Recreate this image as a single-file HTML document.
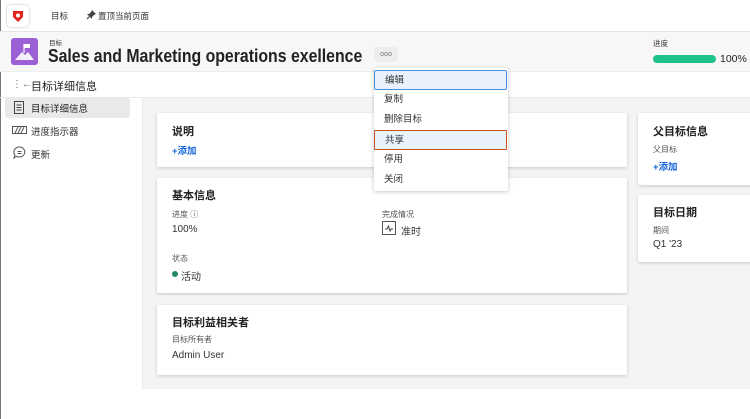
<!DOCTYPE html>
<html><head><meta charset="utf-8"><style>
*{margin:0;padding:0;box-sizing:border-box}
body{width:750px;height:419px;overflow:hidden;background:#fff;font-family:"Liberation Sans","Noto Sans CJK SC",sans-serif;color:#2c2c2c;position:relative}
.a{position:absolute;white-space:nowrap}
.card{position:absolute;background:#fff;box-shadow:0 1px 3px rgba(0,0,0,.18);border-radius:2px}
.h{font-size:11px;font-weight:bold;color:#222}
.s{font-size:8px;color:#555}
.v{font-size:10px;color:#333}
.add{font-size:9.5px;color:#1464d8;font-weight:bold}
.mi{position:absolute;left:0;width:133px;height:20px;font-size:9.5px;color:#333;padding-left:10px;line-height:20px}
</style></head><body>
<div class="a" style="left:0;top:0;width:1px;height:419px;background:#777"></div>
<div class="a" style="left:7px;top:5px;width:22px;height:22px;border-radius:4px;background:#fff;box-shadow:0 0 2px rgba(0,0,0,.3)"></div>
<svg class="a" style="left:11px;top:9px" width="14" height="14" viewBox="0 0 14 14"><path d="M2 2h10v6l-5 5-5-5z" fill="#e2231a"/><circle cx="7" cy="6.5" r="2" fill="#fff"/></svg>
<div class="a" style="left:51px;top:10px;font-size:8.5px;color:#333">目标</div>
<svg class="a" style="left:86px;top:9px" width="11" height="11" viewBox="0 0 11 11"><path d="M6 1l4 4-2 1-2 2 0 2-5-5 2 0 2-2z" fill="#444"/><path d="M3.5 7.5L1 10" stroke="#444" stroke-width="1.2"/></svg>
<div class="a" style="left:98px;top:10px;font-size:8.5px;color:#333">置顶当前页面</div>
<div class="a" style="left:0;top:31px;width:750px;height:41px;background:#f7f7f7;border-top:1px solid #e4e4e4;border-bottom:1px solid #ececec"></div>
<div class="a" style="left:11px;top:38px;width:27px;height:27px;border-radius:3px;background:#9b5fd6"></div>
<svg class="a" style="left:11px;top:38px" width="27" height="27" viewBox="0 0 27 27"><path d="M4 22l7-8 3 3 3-3 6 8z" fill="#fff" opacity=".9"/><path d="M13 6v9" stroke="#fff" stroke-width="1.2"/><path d="M13 6h6v4h-6z" fill="#fff"/></svg>
<div class="a" style="left:49px;top:37px;font-size:6.5px;color:#333">目标</div>
<div class="a" style="left:48px;top:46px;font-size:18px;font-weight:bold;color:#222;transform:scaleX(.88);transform-origin:0 0">Sales and Marketing operations exellence</div>
<div class="a" style="left:374px;top:47px;width:24px;height:15px;background:#ededed;border-radius:3px;font-size:7px;color:#777;text-align:center;line-height:15px">ooo</div>
<div class="a" style="left:653px;top:38px;font-size:7.5px;color:#333">进度</div>
<div class="a" style="left:653px;top:55px;width:63px;height:8px;border-radius:4px;background:#1ec28b"></div>
<div class="a" style="left:720px;top:53px;font-size:10.5px;color:#222">100%</div>
<div class="a" style="left:12px;top:79px;font-size:10px;color:#666">⋮←</div>
<div class="a" style="left:31px;top:78px;font-size:11px;color:#222">目标详细信息</div>
<div class="a" style="left:0;top:97px;width:750px;height:1px;background:#e8e8e8"></div>
<div class="a" style="left:5px;top:98px;width:125px;height:20px;background:#e9e9e9;border-radius:3px"></div>
<svg class="a" style="left:14px;top:101px" width="10" height="13" viewBox="0 0 10 13"><rect x=".5" y=".5" width="9" height="12" fill="none" stroke="#444"/><path d="M2.5 4h5M2.5 6.5h5M2.5 9h5" stroke="#444"/></svg>
<div class="a" style="left:31px;top:101px;font-size:9.5px;color:#222">目标详细信息</div>
<svg class="a" style="left:12px;top:126px" width="15" height="8" viewBox="0 0 15 8"><rect x=".5" y=".5" width="14" height="7" fill="none" stroke="#555"/><path d="M3 7l3-6M6 7l3-6M9 7l3-6" stroke="#555"/></svg>
<div class="a" style="left:31px;top:124px;font-size:9.5px;color:#333">进度指示器</div>
<svg class="a" style="left:13px;top:146px" width="13" height="13" viewBox="0 0 13 13"><path d="M6.5 1a5.5 5 0 1 1-3 9.3L1 12l1-3A5.5 5 0 0 1 6.5 1z" fill="none" stroke="#555"/><path d="M4.5 5.5h4M4.5 7.5h4" stroke="#555"/></svg>
<div class="a" style="left:31px;top:147px;font-size:9.5px;color:#333">更新</div>
<div class="a" style="left:142px;top:98px;width:608px;height:291px;background:#f4f4f4;border-left:1px solid #eaeaea"></div>
<div class="card" style="left:157px;top:113px;width:470px;height:54px"></div>
<div class="a h" style="left:172px;top:123px">说明</div>
<div class="a add" style="left:172px;top:143px">+添加</div>
<div class="card" style="left:157px;top:178px;width:470px;height:115px"></div>
<div class="a h" style="left:172px;top:187px">基本信息</div>
<div class="a s" style="left:172px;top:209px">进度 ⓘ</div>
<div class="a v" style="left:172px;top:224px">100%</div>
<div class="a s" style="left:382px;top:209px">完成情况</div>
<svg class="a" style="left:382px;top:221px" width="14" height="14" viewBox="0 0 14 14"><rect x=".5" y=".5" width="13" height="13" fill="#fff" stroke="#555"/><path d="M3 8h2l1.5-3 1.5 5 1-2h2" fill="none" stroke="#444"/></svg>
<div class="a v" style="left:401px;top:223px">准时</div>
<div class="a s" style="left:172px;top:253px">状态</div>
<div class="a" style="left:172px;top:271px;width:6px;height:6px;border-radius:3px;background:#1f8a60"></div>
<div class="a v" style="left:181px;top:268px">活动</div>
<div class="card" style="left:157px;top:305px;width:470px;height:70px"></div>
<div class="a h" style="left:172px;top:314px">目标利益相关者</div>
<div class="a s" style="left:172px;top:334px">目标所有者</div>
<div class="a v" style="left:172px;top:350px">Admin User</div>
<div class="card" style="left:638px;top:113px;width:120px;height:72px"></div>
<div class="a h" style="left:653px;top:123px">父目标信息</div>
<div class="a s" style="left:653px;top:144px">父目标</div>
<div class="a add" style="left:653px;top:159px">+添加</div>
<div class="card" style="left:638px;top:195px;width:120px;height:67px"></div>
<div class="a h" style="left:653px;top:204px">目标日期</div>
<div class="a s" style="left:653px;top:225px">期间</div>
<div class="a v" style="left:653px;top:239px">Q1 '23</div>
<div class="a" style="left:374px;top:68px;width:134px;height:123px;background:#fff;box-shadow:0 1px 4px rgba(0,0,0,.22);border-radius:2px">
<div class="mi" style="top:2px;background:#e8f1fc;border:1.5px solid #4a8fe0;border-radius:2px">编辑</div>
<div class="mi" style="top:22px">复制</div>
<div class="mi" style="top:42px">删除目标</div>
<div class="mi" style="top:62px;background:#e8f1fc;border:1.5px solid #c8501e;border-radius:1px">共享</div>
<div class="mi" style="top:82px">停用</div>
<div class="mi" style="top:102px">关闭</div>
</div>
</body></html>
